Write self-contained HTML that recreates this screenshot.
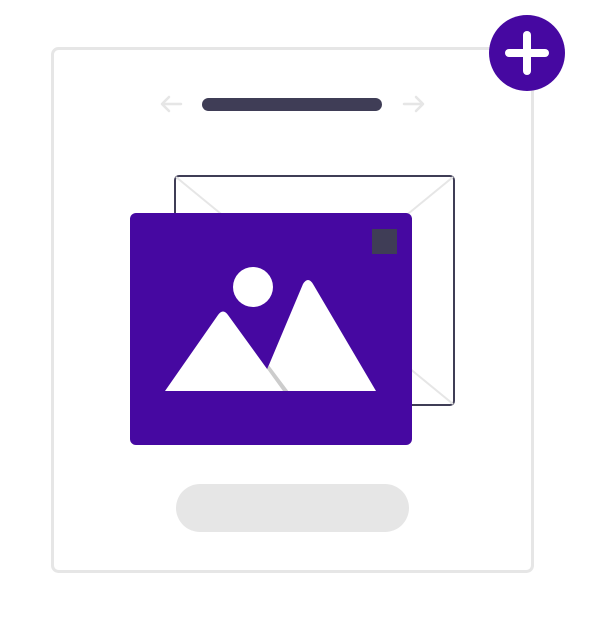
<!DOCTYPE html>
<html><head><meta charset="utf-8"><style>
html,body{margin:0;padding:0;background:#fff;}
svg{display:block;}
</style></head><body>
<svg width="597" height="618" viewBox="0 0 597 618" xmlns="http://www.w3.org/2000/svg">
<defs><clipPath id="m2"><path d="M258 391 L303 284 Q308 276 313 284 L376 391 Z"/></clipPath></defs>
<rect x="52.5" y="48.5" width="480" height="523" rx="6" fill="#fff" stroke="#e6e6e6" stroke-width="3"/>
<rect x="202" y="98" width="180" height="13" rx="6.5" fill="#3f3d56"/>
<g stroke="#e6e6e6" stroke-width="2.5" fill="none" stroke-linecap="round" stroke-linejoin="round">
<path d="M181 104H162M169 97l-7 7 7 7"/>
<path d="M404 104H423M416 97l7 7-7 7"/>
</g>
<rect x="175" y="176" width="279" height="229" rx="4" fill="#fff" stroke="#3f3d56" stroke-width="2"/>
<g stroke="#e6e6e6" stroke-width="2">
<line x1="176" y1="177" x2="453" y2="404"/>
<line x1="453" y1="177" x2="176" y2="404"/>
</g>
<rect x="130" y="213" width="282" height="232" rx="6" fill="#4608a1"/>
<rect x="372" y="229" width="25" height="25" fill="#3f3d56"/>
<circle cx="253" cy="287" r="20" fill="#fff"/>
<path d="M258 391 L303 284 Q308 276 313 284 L376 391 Z" fill="#fff"/>
<path d="M230 315 L287 391 L281 391 Z" fill="#cccccc" stroke="#cccccc" stroke-width="2" clip-path="url(#m2)"/>
<path d="M165 391 L218 315 Q223 308 228 315 L283 391 Z" fill="#fff"/>
<rect x="176" y="484" width="233" height="48" rx="24" fill="#e6e6e6"/>
<circle cx="527" cy="53" r="38" fill="#4608a1"/>
<g stroke="#fff" stroke-width="8" stroke-linecap="round">
<line x1="509" y1="53" x2="545" y2="53"/>
<line x1="527" y1="35" x2="527" y2="71"/>
</g>
</svg>
</body></html>
